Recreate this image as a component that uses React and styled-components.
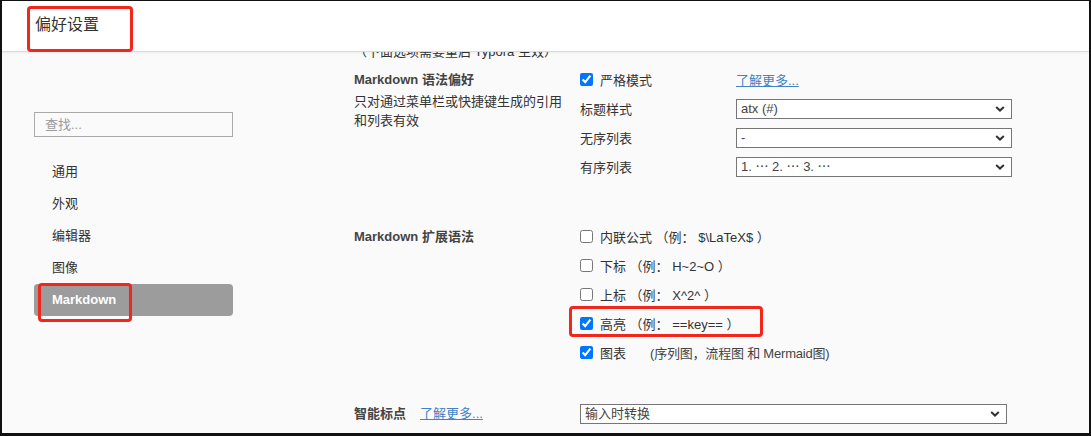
import React from "react";
import styled, { createGlobalStyle } from "styled-components";

const Global = createGlobalStyle`
  html, body { margin: 0; padding: 0; }
  body {
    width: 1091px; height: 436px; overflow: hidden;
    font-family: "Liberation Sans", "Noto Sans CJK SC", sans-serif;
    font-size: 13px; color: #333;
  }
  * { box-sizing: border-box; }
`;

const Frame = styled.div`
  position: relative;
  width: 1091px;
  height: 436px;
  border-style: solid;
  border-color: #111;
  border-width: 1px 2px 3px 2px;
  background: #fafafa;
  overflow: hidden;
  display: flex;
`;

const Header = styled.header`
  position: absolute;
  top: 0; left: 0; right: 0;
  height: 51px;
  background: #fff;
  border-bottom: 1px solid #dadada;
  box-shadow: 0 1px 3px rgba(0,0,0,0.06);
  z-index: 2;
`;

const Title = styled.h1`
  margin: 0;
  padding: 13px 0 0 33px;
  font-size: 16px;
  line-height: 22px;
  font-weight: normal;
  color: #333;
`;

const Mark = styled.div`
  position: absolute;
  top: ${p => p.$top}px;
  left: ${p => p.$left}px;
  width: ${p => p.$w}px;
  height: ${p => p.$h}px;
  border: 3px solid #f3261b;
  border-radius: 4px;
  pointer-events: none;
  z-index: 3;
`;

const Sidebar = styled.aside`
  width: 300px;
  flex: none;
  padding: 111px 0 0 32px;
`;

const Search = styled.input`
  display: block;
  width: 199px;
  height: 25px;
  border: 1px solid #a9a9a9;
  background: transparent;
  padding: 0 10px;
  font: inherit;
  font-size: 13px;
  color: #333;
  outline: none;
  &::placeholder { color: #9a9a9a; }
`;

const Nav = styled.ul`
  list-style: none;
  margin: 19px 0 0;
  padding: 0;
`;

const NavItem = styled.li`
  position: relative;
  width: 199px;
  height: 32px;
  line-height: 31px;
  padding-left: 18px;
  border-radius: 4px;
  color: ${p => (p.$active ? "#fff" : "#333")};
  background: ${p => (p.$active ? "#9c9c9c" : "transparent")};
  font-weight: ${p => (p.$active ? "bold" : "normal")};
`;

const Content = styled.main`
  flex: 1;
  padding: 41px 0 0 52px;
`;

const Note = styled.div`
  line-height: 20px;
  color: #333;
`;

const Section = styled.section`
  display: grid;
  grid-template-columns: 226px 1fr;
  margin-top: ${p => p.$mt}px;
`;

const GroupTitle = styled.div`
  height: 29px;
  line-height: 29px;
  font-weight: bold;
  color: #444;
  display: flex;
  align-items: center;
  gap: 14px;
`;

const Desc = styled.div`
  line-height: 19px;
  margin-top: -2px;
  color: #333;
`;

const Rows = styled.div`
  display: flex;
  flex-direction: column;
`;

const Row = styled.div`
  position: relative;
  height: 29px;
  display: grid;
  grid-template-columns: ${p => (p.$wide ? "1fr" : "156px 1fr")};
  align-items: center;
`;

const Check = styled.label`
  display: flex;
  align-items: center;
  white-space: pre;
  color: #333;
`;

const Box = styled.input.attrs({ type: "checkbox" })`
  width: 13px;
  height: 13px;
  margin: 0 7px 0 0;
  accent-color: #0075ff;
`;

const Aside = styled.span`
  margin-left: 24px;
  color: #444;
  letter-spacing: -0.2px;
`;

const Link = styled.a`
  color: #4183c4;
  text-decoration: underline;
  font-weight: normal;
  cursor: pointer;
`;

const SelectWrap = styled.div`
  position: relative;
  width: ${p => p.$w}px;
  height: 20px;
`;

const Select = styled.select`
  appearance: none;
  -webkit-appearance: none;
  width: 100%;
  height: 20px;
  border: 1px solid #767676;
  border-radius: 0;
  background: #fff;
  padding: 0 20px 0 4px;
  font: inherit;
  font-size: 13px;
  color: #444;
  outline: none;
`;

const Chevron = styled.svg`
  position: absolute;
  right: 7px;
  top: 7px;
  pointer-events: none;
`;

function Dropdown({ w, value }) {
  return (
    <SelectWrap $w={w}>
      <Select defaultValue={value}>
        <option>{value}</option>
      </Select>
      <Chevron width="10" height="6" viewBox="0 0 10 6">
        <path d="M1.2 1 L5 4.6 L8.8 1" fill="none" stroke="#333" strokeWidth="2" />
      </Chevron>
    </SelectWrap>
  );
}

export default function App() {
  const nav = ["通用", "外观", "编辑器", "图像", "Markdown"];
  return (
    <>
      <Global />
      <Frame>
        <Header>
          <Title>偏好设置</Title>
          <Mark $top={5} $left={25} $w={106} $h={46} />
        </Header>
        <Sidebar>
          <Search placeholder="查找..." />
          <Nav>
            {nav.map(n => (
              <NavItem key={n} $active={n === "Markdown"}>
                {n}
                {n === "Markdown" && <Mark $top={-1} $left={4} $w={94} $h={39} />}
              </NavItem>
            ))}
          </Nav>
        </Sidebar>
        <Content>
          <Note>（下面选项需要重启 Typora 生效）</Note>
          <Section $mt={3}>
            <div>
              <GroupTitle>Markdown 语法偏好</GroupTitle>
              <Desc>
                只对通过菜单栏或快捷键生成的引用
                <br />
                和列表有效
              </Desc>
            </div>
            <Rows>
              <Row>
                <Check>
                  <Box defaultChecked />
                  严格模式
                </Check>
                <div>
                  <Link>了解更多...</Link>
                </div>
              </Row>
              <Row>
                <span>标题样式</span>
                <Dropdown w={276} value="atx (#)" />
              </Row>
              <Row>
                <span>无序列表</span>
                <Dropdown w={276} value="-" />
              </Row>
              <Row>
                <span>有序列表</span>
                <Dropdown w={276} value="1. ⋯ 2. ⋯ 3. ⋯" />
              </Row>
            </Rows>
          </Section>
          <Section $mt={41}>
            <div>
              <GroupTitle>Markdown 扩展语法</GroupTitle>
            </div>
            <Rows>
              <Row $wide>
                <Check>
                  <Box />
                  {"内联公式 （例： $\\LaTeX$ ）"}
                </Check>
              </Row>
              <Row $wide>
                <Check>
                  <Box />
                  {"下标 （例： H~2~O ）"}
                </Check>
              </Row>
              <Row $wide>
                <Check>
                  <Box />
                  {"上标 （例： X^2^ ）"}
                </Check>
              </Row>
              <Row $wide>
                <Check>
                  <Box defaultChecked />
                  {"高亮 （例： ==key== ）"}
                </Check>
                <Mark $top={-3} $left={-11} $w={194} $h={31} />
              </Row>
              <Row $wide>
                <Check>
                  <Box defaultChecked />
                  图表
                  <Aside>(序列图，流程图 和 Mermaid图)</Aside>
                </Check>
              </Row>
            </Rows>
          </Section>
          <Section $mt={32}>
            <GroupTitle>
              智能标点
              <Link>了解更多...</Link>
            </GroupTitle>
            <Rows>
              <Row $wide>
                <Dropdown w={427} value="输入时转换" />
              </Row>
            </Rows>
          </Section>
        </Content>
      </Frame>
    </>
  );
}
